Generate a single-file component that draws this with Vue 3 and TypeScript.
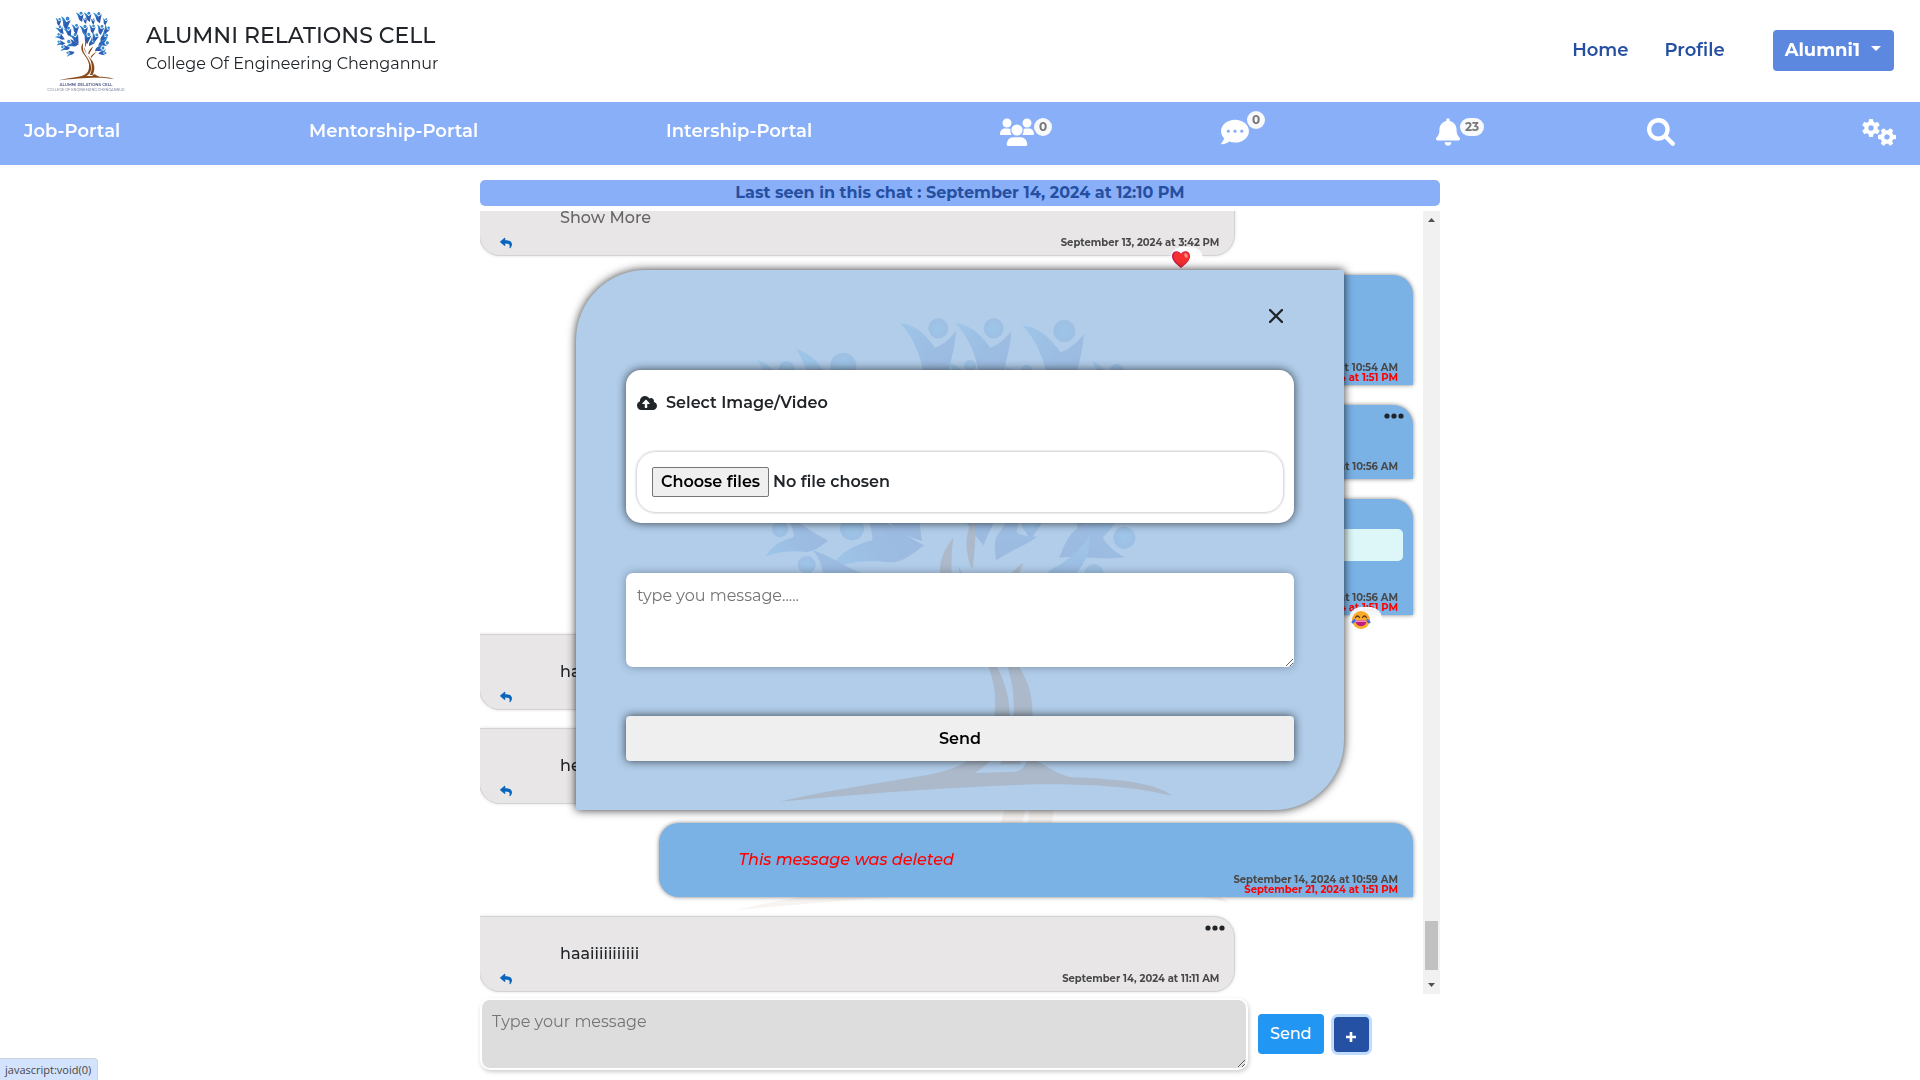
<script setup lang="ts">
import { ref } from 'vue'

interface Message {
  id: number
  mine: boolean
  text: string
  time: string
  deletedAt?: string
  kind?: 'more' | 'deleted' | 'quote' | 'tall'
  menu?: boolean
  reaction?: 'heart' | 'joy'
}

const messages: Message[] = [
  { id: 1, mine: false, text: 'Show More', time: 'September 13, 2024 at 3:42 PM', kind: 'more', reaction: 'heart' },
  { id: 2, mine: true, text: '', time: 'September 14, 2024 at 10:54 AM', deletedAt: 'September 21, 2024 at 1:51 PM', kind: 'tall' },
  { id: 3, mine: true, text: '', time: 'September 14, 2024 at 10:56 AM', menu: true },
  { id: 4, mine: true, text: '', time: 'September 14, 2024 at 10:56 AM', deletedAt: 'September 21, 2024 at 1:51 PM', kind: 'quote', reaction: 'joy' },
  { id: 5, mine: false, text: 'haai', time: 'September 14, 2024 at 10:57 AM' },
  { id: 6, mine: false, text: 'hello', time: 'September 14, 2024 at 10:58 AM' },
  { id: 7, mine: true, text: 'This message was deleted', time: 'September 14, 2024 at 10:59 AM', deletedAt: 'September 21, 2024 at 1:51 PM', kind: 'deleted' },
  { id: 8, mine: false, text: 'haaiiiiiiiiiii', time: 'September 14, 2024 at 11:11 AM', menu: true },
]

/* Leaf figures of the tree: head position, scale and rotation. */
const figures: [number, number, number, number][] = [
  [595, 112, 1, 0], [761, 112, 1, 0], [973, 120, 1.1, 0], [310, 225, 1.3, 12],
  [140, 235, 0.8, 10], [690, 225, 0.6, 0], [860, 240, 0.6, 5], [1130, 240, 0.7, 15],
  [150, 400, 0.9, -20], [330, 430, 1, -10], [500, 370, 1, 5], [680, 390, 1.1, 0],
  [860, 380, 0.9, 10], [1040, 390, 1, 15], [1180, 420, 0.9, 35], [120, 560, 0.9, -45],
  [470, 560, 1.1, -15], [760, 560, 1.1, 15], [930, 570, 1, 25], [1140, 580, 1, 50],
  [336, 712, 1.2, -70], [120, 715, 0.8, -70], [200, 822, 0.9, -75], [870, 700, 0.8, 50],
  [1153, 740, 1.1, 80], [1062, 850, 1, 75], [310, 950, 0.8, -90], [1110, 960, 0.8, 90],
]

const draft = ref('')
const caption = ref('')
</script>

<template>
  <div class="page">
    <svg class="defs" width="0" height="0" aria-hidden="true">
      <defs>
        <linearGradient id="leaf" x1="0" y1="0" x2="1" y2="1">
          <stop offset="0" stop-color="#2fa5e0" />
          <stop offset="0.5" stop-color="#2c63b8" />
          <stop offset="1" stop-color="#2c4fa6" />
        </linearGradient>
        <radialGradient id="head">
          <stop offset="0" stop-color="#2fa5e0" />
          <stop offset="1" stop-color="#2f72c0" />
        </radialGradient>
        <symbol id="tree" viewBox="0 0 1380 1560">
          <g v-for="(f, i) in figures" :key="i" :transform="`translate(${f[0]} ${f[1]}) rotate(${f[3]}) scale(${f[2]})`">
            <circle r="30" fill="url(#head)" />
            <path fill="url(#leaf)" d="M-115-16C-60-8-35 25-10 58C18 48 40 25 53 8C50 70 30 110 22 185C-5 165-38 150-48 118C-60 60-85 15-115-16Z" />
          </g>
          <g fill="#8a4b1c">
            <path d="M695 690C670 740 680 800 697 835C705 790 706 740 708 690Z" />
            <path d="M640 740C590 800 590 860 620 930C660 1010 750 1080 764 1200C772 1330 740 1420 560 1452C400 1480 250 1500 120 1532C400 1505 700 1485 900 1480C1080 1478 1200 1490 1298 1515C1240 1470 1120 1465 990 1458C920 1440 905 1400 860 1410Q850 1440 825 1442L705 1446C790 1390 815 1330 808 1250C800 1120 690 1020 650 930C630 870 632 800 640 740Z" />
            <path d="M656 825C660 940 760 1020 800 1120C820 1180 824 1230 820 1290C815 1350 800 1390 780 1420L840 1420C880 1340 880 1290 876 1240C870 1130 780 1060 720 980C690 930 680 870 656 825Z" />
            <path d="M850 815C790 860 770 900 745 960L770 985C780 930 830 880 850 815ZM930 930C860 960 820 1000 800 1040L815 1060C840 1010 890 980 930 930Z" />
          </g>
        </symbol>
        <symbol id="reply" viewBox="0 0 512 512">
          <path d="M8.309 189.836L184.313 37.851C199.719 24.546 224 35.347 224 56.015v80.053c160.629 1.839 288 34.032 288 186.258 0 61.441-39.581 122.309-83.333 154.132-13.653 9.931-33.111-2.533-28.077-18.631 45.344-145.012-21.507-183.51-176.59-185.742V360c0 20.7-24.3 31.453-39.687 18.164l-176.004-152c-11.071-9.562-11.086-26.753 0-36.328z" />
        </symbol>
      </defs>
    </svg>

    <svg class="backdrop" aria-hidden="true"><use href="#tree" /></svg>

    <header class="top">
      <svg class="logo" viewBox="0 0 160 168" role="img" aria-label="Alumni Relations Cell logo">
        <use href="#tree" x="12" y="0" width="130" height="147" />
        <text x="78" y="155" text-anchor="middle" font-size="8" font-weight="600" fill="#4a5684">ALUMNI RELATIONS CELL</text>
        <text x="78" y="165" text-anchor="middle" font-size="7" fill="#8a8fa6">COLLEGE OF ENGINEERING CHENGANNUR</text>
      </svg>
      <div class="brand">
        <h1>ALUMNI RELATIONS CELL</h1>
        <p>College Of Engineering Chengannur</p>
      </div>
      <nav class="links">
        <a href="#">Home</a>
        <a href="#">Profile</a>
        <button type="button" class="account">Alumni1<span class="caret"></span></button>
      </nav>
    </header>

    <nav class="portal">
      <a href="#">Job-Portal</a>
      <a href="#">Mentorship-Portal</a>
      <a href="#">Intership-Portal</a>
      <a href="#" class="icon" aria-label="Groups">
        <svg width="34" height="28" viewBox="0 0 34 28" fill="currentColor">
          <circle cx="7" cy="5" r="4.5" /><circle cx="27" cy="5" r="4.5" /><circle cx="17" cy="12" r="5.6" />
          <path d="M0 16.2C0 13 2 10.600 5 10.600h3.500c.7 0 1.400.2 2 .5-.4 2.300.2 4.300 1.300 5.800H.8c-.5 0-.8-.3-.8-.7zM34 16.200c0-3.200-2-5.600-5-5.600h-3.500c-.7 0-1.400.2-2 .5.4 2.300-.2 4.300-1.300 5.800h11c.5 0 .8-.3.8-.7zM6.700 26.600c0-4.200 2.800-7.400 6.600-7.400h7.400c3.800 0 6.600 3.200 6.600 7.400 0 .8-.5 1.400-1.300 1.400H8c-.8 0-1.300-.6-1.300-1.400z" />
        </svg>
        <span class="badge">0</span>
      </a>
      <a href="#" class="icon" aria-label="Messages">
        <svg width="28" height="28" viewBox="0 0 512 512" fill="currentColor">
          <path d="M256 32C114.600 32 1 125 1 240c0 49.600 21.300 95 57 130.700-12.500 50.400-54.300 95.300-54.800 95.800-2.200 2.200-2.900 5.700-1.500 8.700 1.200 3 4 4.800 7.300 4.800 66.200 0 115.100-31.800 140.600-51.400C182 441 218 448 256 448c141.400 0 255-93 255-208S397.400 32 256 32z" />
          <g fill="#8aaff9"><circle cx="134" cy="240" r="28" /><circle cx="256" cy="240" r="28" /><circle cx="380" cy="240" r="28" /></g>
        </svg>
        <span class="badge raised">0</span>
      </a>
      <a href="#" class="icon" aria-label="Notifications">
        <svg width="24" height="28" viewBox="0 0 448 512" fill="currentColor">
          <path d="M256 32V51.200C329 66.030 384 130.600 384 208V226.800C384 273.900 401.300 319.200 432.500 354.400L439.900 362.700C448.300 372.200 450.400 385.600 445.200 397.100C440 408.600 428.600 416 416 416H32C19.400 416 7.971 408.600 2.809 397.100C-2.353 385.600-.288 372.200 8.084 362.700L15.500 354.400C46.740 319.200 64 273.900 64 226.800V208C64 130.600 118.100 66.030 192 51.200V32C192 14.330 206.300 0 224 0C241.700 0 256 14.330 256 32zM224 512C207 512 190.700 505.300 178.700 493.300C166.700 481.300 160 464.100 160 448H288C288 464.100 281.300 481.300 269.300 493.300C257.300 505.300 240.100 512 224 512z" />
        </svg>
        <span class="badge">23</span>
      </a>
      <a href="#" class="icon" aria-label="Search">
        <svg width="28" height="28" viewBox="0 0 512 512" fill="currentColor">
          <path d="M500.300 443.700l-119.700-119.700c27.220-40.410 40.650-90.900 33.460-144.700C401.800 87.790 326.800 13.320 235.200 1.723C99.010-15.510-15.510 99.010 1.724 235.200c11.600 91.640 86.080 166.700 177.600 178.900c53.800 7.189 104.300-6.236 144.700-33.460l119.700 119.700c15.620 15.620 40.950 15.620 56.570 0C515.900 484.700 515.900 459.300 500.300 443.700zM79.100 208c0-70.580 57.420-128 128-128s128 57.420 128 128c0 70.580-57.420 128-128 128S79.100 278.600 79.100 208z" />
        </svg>
      </a>
      <a href="#" class="icon" aria-label="Settings">
        <svg width="34" height="28" viewBox="0 0 34 28">
          <g v-for="(g, i) in [[9, 10, 0], [25, 19, 30]]" :key="i" :transform="`translate(${g[0]} ${g[1]}) rotate(${g[2]})`">
            <circle r="4.700" fill="none" stroke="currentColor" stroke-width="4" />
            <rect v-for="n in 6" :key="n" x="-2.200" y="-9" width="4.400" height="4" rx="1" fill="currentColor" :transform="`rotate(${n * 60})`" />
          </g>
        </svg>
      </a>
    </nav>

    <main class="chat">
      <div class="seen">Last seen in this chat : September 14, 2024 at 12:10 PM</div>

      <div class="stream">
        <div class="messages">
          <article v-for="m in messages" :key="m.id" class="message" :class="[m.mine ? 'mine' : 'theirs', m.kind]">
            <div class="menu">
              <button v-if="m.menu" type="button" aria-label="Message options">
                <svg width="20" height="6" viewBox="0 0 20 6" fill="currentColor"><circle cx="3" cy="3" r="2.600" /><circle cx="10" cy="3" r="2.600" /><circle cx="17" cy="3" r="2.600" /></svg>
              </button>
            </div>
            <div v-if="m.kind === 'quote'" class="quoted"></div>
            <p class="text">{{ m.text }}</p>
            <footer>
              <button v-if="!m.mine" type="button" class="reply" aria-label="Reply"><svg width="12" height="12"><use href="#reply" /></svg></button>
              <div class="stamps">
                <time>{{ m.time }}</time>
                <time v-if="m.deletedAt" class="removed">{{ m.deletedAt }}</time>
              </div>
            </footer>
            <span v-if="m.reaction" class="reaction">
              <svg v-if="m.reaction === 'heart'" width="18" height="17" viewBox="0 0 18 17">
                <path fill="#c2185b" d="M9 17C4 13 0 9.500 0 5.200 0 2.200 2 .3 4.600.3 6.500.3 8 1.300 9 3 10 1.300 11.500.3 13.400.3 16 .3 18 2.200 18 5.200 18 9.500 14 13 9 17z" />
                <path fill="#f42f2f" d="M9.500 16C5.500 12.500 1.500 9.500 1.500 5.400 1.500 2.800 3 1 5 1s3.200 1 4.200 2.700C10.200 1.800 11.500.8 13.500.8c2.500 0 4 1.900 4 4.400 0 4.300-4 7.300-8 10.800z" />
                <ellipse cx="14" cy="4.500" rx="1.600" ry="2.400" fill="#ff8a80" transform="rotate(-25 14 4.500)" />
              </svg>
              <svg v-else width="20" height="18" viewBox="0 0 20 18">
                <circle cx="10" cy="9" r="9" fill="#fbab2c" />
                <path d="M4.500 6.500q2-3 4 0M11.500 6.500q2-3 4 0" fill="none" stroke="#5b3413" stroke-width="1.300" stroke-linecap="round" />
                <path d="M4.500 9.500h11c0 3.500-2.300 5.700-5.500 5.700s-5.500-2.200-5.500-5.700z" fill="#bb1d80" />
                <path d="M5 9.500h10v1.500H5z" fill="#f58bc0" />
                <path d="M4.300 7.500C4.500 10 4 12 2 12.500-.5 12.500 0 9.500 4.300 7.500zM15.700 7.500C15.500 10 16 12 18 12.500c2.500 0 2-3-2.300-5z" fill="#3d6df0" />
              </svg>
            </span>
          </article>
        </div>
        <div class="scrollbar" aria-hidden="true">
          <svg width="17" height="17" viewBox="0 0 17 17"><path d="M5 11h7L8.500 7z" fill="#505050" /></svg>
          <span class="thumb"></span>
          <svg width="17" height="17" viewBox="0 0 17 17"><path d="M5 6h7l-3.500 4z" fill="#505050" /></svg>
        </div>
      </div>

      <form class="composer" @submit.prevent>
        <textarea v-model="draft" placeholder="Type your message" aria-label="Type your message"></textarea>
        <button type="submit" class="send">Send</button>
        <button type="button" class="attach" aria-label="Attach a file">
          <svg width="10" height="10" viewBox="0 0 10 10"><path d="M5 0v10M0 5h10" stroke="#fff" stroke-width="2.600" /></svg>
        </button>
      </form>
    </main>

    <form class="modal" role="dialog" aria-label="Send a file" @submit.prevent>
      <svg class="mark" aria-hidden="true"><use href="#tree" /></svg>
      <div class="close-row">
        <button type="button" aria-label="Close">
          <svg width="14" height="14" viewBox="0 0 14 14"><path d="M1 1l12 12M13 1L1 13" stroke="#212529" stroke-width="2.400" stroke-linecap="round" /></svg>
        </button>
      </div>
      <section class="file-card">
        <h2>
          <svg width="20" height="16" viewBox="0 0 640 512" fill="currentColor">
            <path d="M537.600 226.600c4.100-10.700 6.400-22.400 6.400-34.600 0-53-43-96-96-96-19.700 0-38.100 6-53.300 16.200C367 64.200 315.300 32 256 32c-88.400 0-160 71.600-160 160 0 2.700.1 5.400.2 8.100C40.200 219.800 0 273.200 0 336c0 79.500 64.500 144 144 144h368c70.700 0 128-57.300 128-128 0-61.900-44-113.600-102.400-125.400zM393.400 288H328v112c0 8.800-7.200 16-16 16h-48c-8.800 0-16-7.200-16-16V288h-65.400c-14.300 0-21.400-17.200-11.300-27.300l105.400-105.400c6.200-6.200 16.400-6.200 22.600 0l105.400 105.400c10.100 10.100 2.900 27.300-11.300 27.300z" />
          </svg>
          Select Image/Video
        </h2>
        <div class="picker">
          <input id="media" type="file" multiple accept="image/*,video/*" />
          <label for="media">Choose files</label>
          <span>No file chosen</span>
        </div>
      </section>
      <textarea v-model="caption" placeholder="type you message....." aria-label="Caption"></textarea>
      <button type="submit" class="submit">Send</button>
    </form>

    <div class="status">javascript:void(0)</div>
  </div>
</template>

<style>
body {
  margin: 0;
  background: #fff;
}
</style>

<style scoped>
* {
  box-sizing: border-box;
}

.page {
  display: flex;
  flex-direction: column;
  height: 100vh;
  overflow: hidden;
  color: #212529;
  font: 500 16px/24px Montserrat, Inter, sans-serif;
}

.defs {
  position: absolute;
}

h1, h2, p {
  margin: 0;
}

a {
  color: inherit;
  text-decoration: none;
}

button, textarea {
  font: inherit;
  cursor: pointer;
}

svg {
  display: block;
}

.backdrop {
  position: fixed;
  top: 267px;
  left: calc(50% - 275px);
  z-index: -1;
  width: 580px;
  height: 655px;
  opacity: 0.06;
}

.top {
  display: flex;
  align-items: center;
  flex: none;
  height: 102px;
  padding: 0 26px 2px 47px;
}

.logo {
  width: 80px;
  height: 84px;
  margin-right: 19px;
  overflow: visible;
}

.brand h1 {
  font-size: 22px;
  font-weight: 500;
  line-height: 28px;
}

.brand p {
  font-size: 16px;
  font-weight: 400;
  line-height: 28px;
}

.links {
  display: flex;
  align-items: center;
  gap: 36px;
  margin-left: auto;
  color: #254fa0;
  font-size: 18px;
  font-weight: 600;
}

.account {
  display: flex;
  align-items: center;
  gap: 11px;
  height: 41px;
  margin-left: 12px;
  padding: 0 13px 0 12px;
  border: 0;
  border-radius: 4px;
  background: #5c89df;
  color: #fff;
  font-weight: 700;
}

.caret {
  margin-bottom: 4px;
  border: 5px solid transparent;
  border-top-color: #fff;
  border-bottom: 0;
}

.portal {
  display: grid;
  grid-template-columns: 285fr 357fr 334fr 221fr 215fr 211fr 215fr 34fr;
  align-items: start;
  flex: none;
  height: 63px;
  padding: 16px 24px 0;
  background: #8aaff9;
  color: #fff;
  font-size: 18px;
  font-weight: 600;
  line-height: 26px;
}

.icon {
  display: flex;
  align-items: flex-start;
}

.badge {
  height: 18px;
  padding: 0 5px;
  border-radius: 9px;
  background: #f8f9fa;
  color: #777;
  font-size: 12px;
  font-weight: 700;
  line-height: 18px;
}

.raised {
  margin: -7px 0 0 -2px;
}

.chat {
  display: flex;
  flex: 1;
  flex-direction: column;
  width: 50%;
  min-height: 0;
  margin: 0 auto;
  padding: 15px 0 10px;
}

.seen {
  flex: none;
  border-radius: 5px;
  background: #8aaff9;
  color: #254fa0;
  font-weight: 700;
  line-height: 26px;
  text-align: center;
}

.stream {
  display: flex;
  flex: 1;
  min-height: 0;
  margin: 5px 0 4px;
}

.messages {
  display: flex;
  flex: 1;
  flex-direction: column;
  justify-content: flex-end;
  gap: 20px;
  overflow: hidden;
  padding-bottom: 3px;
}

.message {
  position: relative;
  flex: none;
  width: 80%;
  padding-bottom: 2px;
}

.theirs {
  border-radius: 0 20px 20px 20px;
  background: #e8e6e7;
  box-shadow: 0 0 0 1px #d3d3d3, 0 0 4px rgba(0, 0, 0, 0.2);
}

.mine {
  align-self: flex-end;
  margin-right: 10px;
  border-radius: 20px 20px 0 20px;
  background: #7ab2e6;
  box-shadow: 0 0 4px rgba(0, 0, 0, 0.5);
}

.menu {
  display: flex;
  justify-content: flex-end;
  height: 25px;
  padding: 8px 9px 0 0;
}

.menu button, .reply, .close-row button {
  padding: 0;
  border: 0;
  background: none;
  color: inherit;
}

.menu button {
  height: 6px;
}

.quoted {
  height: 32px;
  margin: 5px 10px;
  border-radius: 5px;
  background: #ddf6f8;
}

.text {
  height: 24px;
  margin-bottom: 3px;
  padding-left: 80px;
}

.tall .text {
  height: 60px;
}

.more .text {
  color: #666;
}

.deleted .text {
  color: #f00;
  font-style: italic;
}

footer {
  display: flex;
  align-items: center;
  height: 20px;
  padding: 0 15px 0 20px;
}

.reply svg {
  fill: #0a66bd;
}

.stamps {
  display: flex;
  flex-direction: column;
  align-items: flex-end;
  margin-left: auto;
  color: #484848;
  font-size: 10px;
  font-weight: 700;
  line-height: 10px;
}

.removed {
  color: #f00;
}

.reaction {
  position: absolute;
  right: 31px;
  bottom: -16px;
  width: 33px;
  height: 24px;
  padding: 4px 2px;
  border-radius: 14px;
  background: rgba(255, 255, 255, 0.9);
}

.scrollbar {
  display: flex;
  flex-direction: column;
  flex: none;
  align-items: center;
  width: 17px;
  background: #f1f1f1;
}

.thumb {
  width: 13px;
  height: 49px;
  margin: auto 0 7px;
  background: #c1c1c1;
}

.composer {
  display: flex;
  align-items: center;
  flex: none;
  gap: 10px;
}

.composer textarea {
  width: 80%;
  height: 72px;
  padding: 10px;
  border: 2px solid #fff;
  border-radius: 10px;
  outline: 0;
  background: #ddd;
  box-shadow: 1px 2px 4px rgba(0, 0, 0, 0.2);
  font-weight: 400;
  line-height: 24px;
}

textarea::placeholder {
  color: #757575;
}

.send {
  height: 40px;
  padding: 0 12px;
  border: 0;
  border-radius: 4px;
  background: #2196f3;
  color: #fff;
}

.attach {
  display: grid;
  place-items: center;
  width: 35px;
  height: 35px;
  padding: 5px 0 0;
  border: 0;
  border-radius: 4px;
  background: #2451a3;
  box-shadow: 0 0 0 3px #bfdcff;
}

.modal {
  position: fixed;
  top: 50%;
  left: 50%;
  display: flex;
  flex-direction: column;
  width: 40%;
  padding: 0 50px 49px;
  border-radius: 70px 0;
  background: #b1cdea;
  box-shadow: 0 0 10px rgba(0, 0, 0, 0.8);
  transform: translate(-50%, -50%);
}

.mark {
  position: absolute;
  top: 21px;
  left: calc(50% - 220px);
  width: 460px;
  height: 520px;
  opacity: 0.15;
}

.close-row {
  display: flex;
  justify-content: flex-end;
  height: 100px;
  padding: 39px 11px 0 0;
}

.close-row button {
  width: 14px;
  height: 14px;
}

.file-card {
  position: relative;
  padding: 18px 10px 10px;
  border-radius: 15px;
  background: #fff;
  box-shadow: 0 0 10px rgba(0, 0, 0, 0.7);
  font-weight: 600;
}

.file-card h2 {
  display: flex;
  align-items: center;
  gap: 9px;
  height: 30px;
  margin-bottom: 33px;
  padding-left: 1px;
  font: inherit;
}

.picker {
  display: flex;
  align-items: center;
  gap: 4px;
  height: 62px;
  padding: 0 15px;
  border: 1px solid #ddd;
  border-radius: 20px;
  box-shadow: 0 0 2px rgba(0, 0, 0, 0.25);
}

.picker input {
  position: absolute;
  width: 1px;
  height: 1px;
  opacity: 0;
}

.picker label {
  padding: 2px 8px;
  border: 1px solid #767676;
  border-radius: 2px;
  background: #efefef;
  color: #000;
}

.modal textarea {
  position: relative;
  height: 94px;
  margin: 50px 0 49px;
  padding: 13px 11px;
  border: 0;
  border-radius: 7px;
  outline: 0;
  background: #fff;
  box-shadow: 0 0 10px rgba(0, 0, 0, 0.3);
  font-weight: 400;
  line-height: 20px;
}

.submit {
  position: relative;
  height: 45px;
  border: 0;
  border-radius: 4px;
  background: #efefef;
  box-shadow: 0 0 10px rgba(0, 0, 0, 0.7);
  color: #000;
  font-weight: 600;
}

.status {
  position: fixed;
  bottom: 0;
  left: 0;
  padding: 0 6px 0 5px;
  border-top: 1px solid #d0d4da;
  border-right: 1px solid #d0d4da;
  border-top-right-radius: 4px;
  background: #d3e3fd;
  color: #474747;
  font: 11px/21px "Open Sans", sans-serif;
}
</style>
